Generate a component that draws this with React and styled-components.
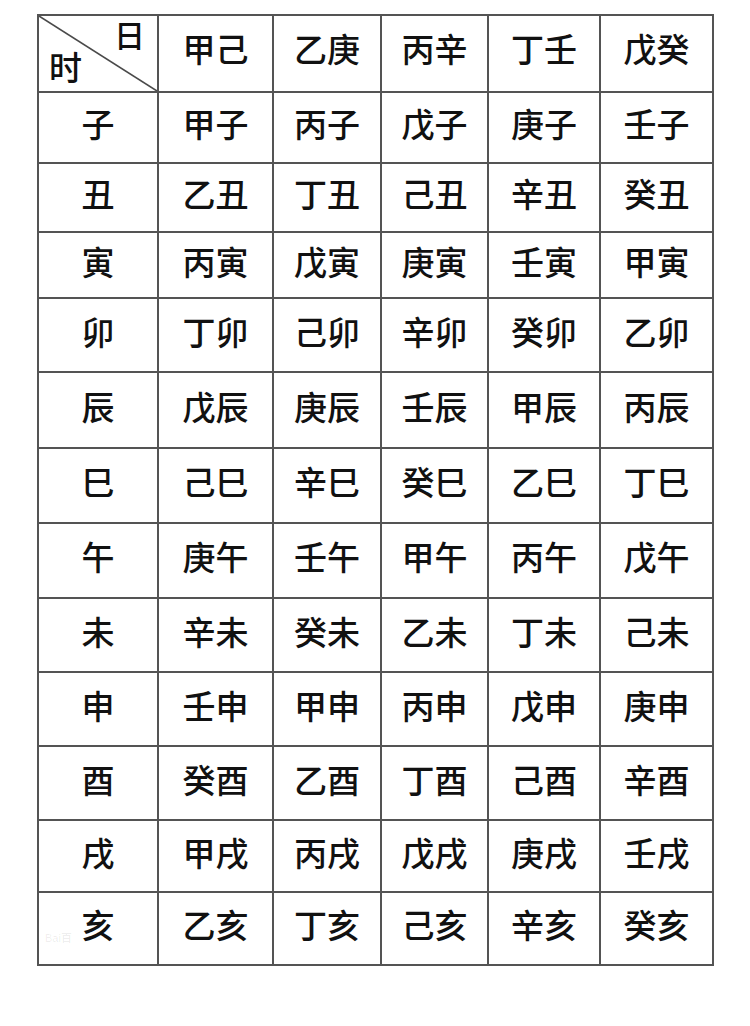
import React from "react";
import styled, { createGlobalStyle } from "styled-components";

const GlobalStyle = createGlobalStyle`
  html, body {
    margin: 0;
    padding: 0;
    background: #fff;
  }
  body {
    font-family: "Noto Sans CJK SC", "Noto Sans", sans-serif;
  }
`;

const Page = styled.div`
  width: 750px;
  height: 1026px;
  padding: 14px 0 0 37px;
  box-sizing: border-box;
`;

const Grid = styled.div`
  display: grid;
  grid-template-columns: 118px 113px 106px 105px 110px 111px;
  grid-template-rows: 75px 69px 67px 64px 72px 74px 73px 73px 72px 72px 72px 70px 71px;
  gap: 2px;
  padding: 2px;
  width: max-content;
  background: #545454;
`;

const Cell = styled.div`
  position: relative;
  display: flex;
  align-items: center;
  justify-content: center;
  background: #fff;
  color: #111;
  font-size: 33px;
  font-weight: 500;
  line-height: 1;
  padding-bottom: ${(p) => (p.$header ? "10px" : "8px")};
  box-sizing: border-box;
`;

const Corner = styled.div`
  position: relative;
  background: #fff;
  color: #111;
  font-weight: 500;
  line-height: 1;
`;

const Diagonal = styled.svg`
  position: absolute;
  inset: 0;
  width: 100%;
  height: 100%;
`;

const CornerLabel = styled.span`
  position: absolute;
  font-size: ${(p) => p.$size}px;
  ${(p) => (p.$top ? "top: 2px; right: 12px;" : "bottom: 8px; left: 10px;")}
`;

const Watermark = styled.span`
  position: absolute;
  left: 6px;
  bottom: 20px;
  font-family: "Liberation Sans", "Noto Sans CJK SC", sans-serif;
  font-size: 11px;
  color: rgba(0, 0, 0, 0.08);
  pointer-events: none;
`;

const heads = ["甲己", "乙庚", "丙辛", "丁壬", "戊癸"];

const rows = [
  ["子", "甲子", "丙子", "戊子", "庚子", "壬子"],
  ["丑", "乙丑", "丁丑", "己丑", "辛丑", "癸丑"],
  ["寅", "丙寅", "戊寅", "庚寅", "壬寅", "甲寅"],
  ["卯", "丁卯", "己卯", "辛卯", "癸卯", "乙卯"],
  ["辰", "戊辰", "庚辰", "壬辰", "甲辰", "丙辰"],
  ["巳", "己巳", "辛巳", "癸巳", "乙巳", "丁巳"],
  ["午", "庚午", "壬午", "甲午", "丙午", "戊午"],
  ["未", "辛未", "癸未", "乙未", "丁未", "己未"],
  ["申", "壬申", "甲申", "丙申", "戊申", "庚申"],
  ["酉", "癸酉", "乙酉", "丁酉", "己酉", "辛酉"],
  ["戌", "甲戌", "丙戌", "戊戌", "庚戌", "壬戌"],
  ["亥", "乙亥", "丁亥", "己亥", "辛亥", "癸亥"],
];

export default function App() {
  return (
    <>
      <GlobalStyle />
      <Page>
        <Grid>
          <Corner>
            <Diagonal viewBox="0 0 100 100" preserveAspectRatio="none">
              <line
                x1="0"
                y1="0"
                x2="100"
                y2="100"
                stroke="#4a4a4a"
                strokeWidth="1.6"
                vectorEffect="non-scaling-stroke"
              />
            </Diagonal>
            <CornerLabel $top $size={31}>日</CornerLabel>
            <CornerLabel $size={33}>时</CornerLabel>
          </Corner>
          {heads.map((h) => (
            <Cell key={h} $header>
              {h}
            </Cell>
          ))}
          {rows.map((row) =>
            row.map((text, i) => (
              <Cell key={text + i}>
                {text}
                {text === "亥" && i === 0 && <Watermark>Bai百</Watermark>}
              </Cell>
            ))
          )}
        </Grid>
      </Page>
    </>
  );
}
